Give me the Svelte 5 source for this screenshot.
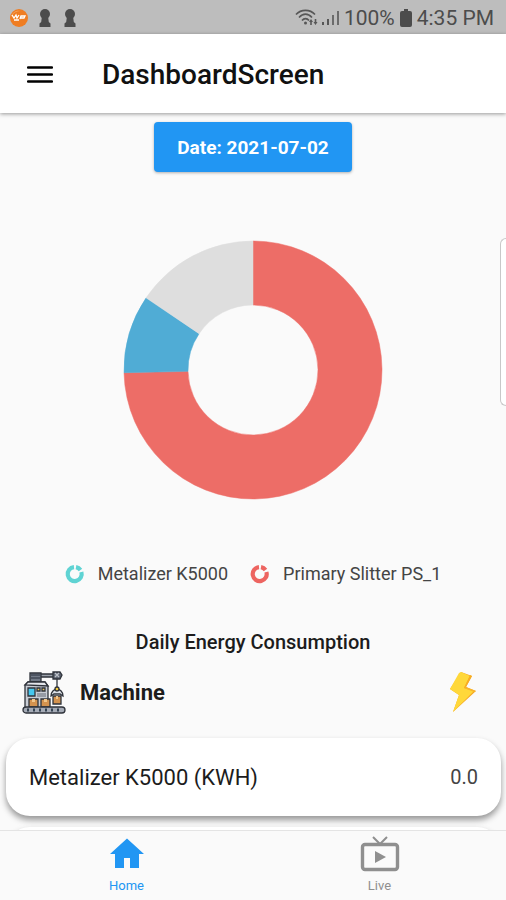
<script lang="ts">
  type Slice = { value: number; color: string };

  const slices: Slice[] = [
    { value: 268.8, color: "#ed6d67" },
    { value: 35.2, color: "#50acd5" },
    { value: 56, color: "#dedede" },
  ];

  const legend = [
    { label: "Metalizer K5000", color: "#5fd3d3" },
    { label: "Primary Slitter PS_1", color: "#ed6460" },
  ];

  const machines = [{ name: "Metalizer K5000 (KWH)", value: "0.0" }];

  let activeTab = $state("home");

  function point(radius: number, degrees: number) {
    const rad = ((degrees - 90) * Math.PI) / 180;
    return `${130 + radius * Math.cos(rad)} ${130 + radius * Math.sin(rad)}`;
  }

  function slicePath(start: number, end: number) {
    const large = end - start > 180 ? 1 : 0;
    return `M${point(129, start)} A129 129 0 ${large} 1 ${point(129, end)} L${point(65, end)} A65 65 0 ${large} 0 ${point(65, start)} Z`;
  }

  let arcs = $derived(
    slices.map((slice, i) => {
      const start = slices.slice(0, i).reduce((sum, s) => sum + s.value, 0);
      return { color: slice.color, d: slicePath(start, start + slice.value) };
    }),
  );
</script>

{#snippet keyhole()}
  <svg class="keyhole" width="12" height="20" viewBox="0 0 12 20" fill="#4c4c4c">
    <circle cx="6" cy="6" r="5" />
    <path d="M3 8h6l.8 6 1.700 1.500V19H.500v-3.500L2.200 14z" />
  </svg>
{/snippet}

<div class="screen">
  <div class="status-bar">
    <div class="status-group notifications">
      <svg width="20" height="20" viewBox="0 0 20 20">
        <circle cx="10" cy="10" r="9" fill="#ef7d22" />
        <path d="M2 9c1-4 5-7 9-6-4 0-7 2-9 6z" fill="#f6a560" />
        <path
          d="M3 7l2 3 2-3 1 3 2-3M11 11l1-3h4l-1 2h-3M5 12h5"
          fill="none"
          stroke="#fff"
          stroke-width="1.300"
        />
      </svg>
      {@render keyhole()}
      {@render keyhole()}
    </div>
    <div class="status-group">
      <svg width="45" height="20" viewBox="0 0 45 20" fill="none" stroke="#575757">
        <g stroke-width="1.600">
          <path d="M1 6.500C6 1 15 1 20 6.500" />
          <path d="M4 9.500C8 5 13 5 17 9.500" />
          <path d="M7 12.500C9 10 12 10 14 12.500" />
        </g>
        <circle cx="10.500" cy="15" r="1.500" fill="#575757" stroke="none" />
        <path
          d="M16 11l2 3h-1.200v3h-1.600v-3H14zM20.500 17l-2-3h1.200v-3h1.600v3h1.200z"
          fill="#575757"
          stroke="none"
        />
        <path d="M28 17v-3M33 17v-6" stroke-width="2" />
        <path d="M38 17V7M43 17V3" stroke-width="1.600" />
      </svg>
      <span>100%</span>
      <svg width="14" height="20" viewBox="0 0 14 20" fill="#4c4c4c">
        <path d="M5 1h4v2h2a2 2 0 0 1 2 2v12a2 2 0 0 1-2 2H3a2 2 0 0 1-2-2V5a2 2 0 0 1 2-2h2z" />
      </svg>
      <span>4:35 PM</span>
    </div>
  </div>

  <header class="app-bar">
    <button class="menu-btn" aria-label="Open menu">
      <svg
        width="26"
        height="20"
        viewBox="0 0 26 20"
        stroke="#000"
        stroke-width="2.400"
        stroke-linecap="round"
      >
        <path d="M1 2.500h24M1 9.500h24M1 16.500h24" />
      </svg>
    </button>
    <h1>DashboardScreen</h1>
  </header>

  <main>
    <button class="date-btn">Date: 2021-07-02</button>

    <svg class="donut" viewBox="0 0 260 260" role="img" aria-label="Energy share">
      {#each arcs as arc}
        <path d={arc.d} fill={arc.color} stroke={arc.color} stroke-width="0.500" />
      {/each}
    </svg>

    <ul class="legend">
      {#each legend as item}
        <li>
          <svg
            width="20"
            height="20"
            viewBox="0 0 20 20"
            fill="none"
            stroke={item.color}
            stroke-width="4.200"
          >
            <path d="M16.400 8A7 7 0 1 1 9 3.100" />
            <path d="M11 3.100A7 7 0 0 1 15.500 6" />
          </svg>
          <span>{item.label}</span>
        </li>
      {/each}
    </ul>

    <h2>Daily Energy Consumption</h2>

    <div class="machine-head">
      <svg width="44" height="44" viewBox="0 0 44 44" stroke="#2f333b" stroke-width="1.300">
        <path d="M18 4h16v3H18z" fill="#9ba1ab" />
        <path d="M8 3h11v9H8z" fill="#737b88" />
        <path d="M9 5h9M9 8h9" stroke="#424955" />
        <path d="M31 2h7l2 3-2 4h-7z" fill="#5c6370" />
        <path d="M33 3l4 4M37 3l-4 4" stroke="#bcc1c9" />
        <path d="M35 9v9" fill="none" />
        <path d="M3 15l3-3h17l3 4v22H3z" fill="#c9cdd5" />
        <path d="M3 15l3-3h17l3 4z" fill="#e5e7ec" />
        <path d="M6 18h7v8H6z" fill="#46c8ef" />
        <path d="M15 18h3v3h-3zM20 18h3v3h-3z" fill="#e8c45d" />
        <path d="M15 24h9M15 26h9" stroke="#858b95" />
        <path d="M29 26c0-9 12-9 12 0l-3-2h-6z" fill="#dce0e6" />
        <circle cx="35" cy="19" r="2" fill="#f1ca3d" />
        <path d="M7 29h9v8H7zM19 29h9v8h-9zM31 26h8v8h-8z" fill="#d4934f" />
        <path d="M10 29h3v3h-3zM22 29h3v3h-3zM34 26h2v3h-2z" fill="#f1c78c" stroke="none" />
        <rect x="1" y="37" width="42" height="6" rx="3" fill="#a5abb6" />
        <path
          d="M5 40h2M11 40h2M17 40h2M23 40h2M29 40h2M35 40h2"
          stroke="#344251"
          stroke-width="3"
        />
      </svg>
      <h3>Machine</h3>
      <svg class="bolt" width="28" height="44" viewBox="0 0 28 44">
        <path d="M12 2L23 6 17 17 27 21 4 42 10 25 1 19z" fill="#f5a623" />
        <path d="M10 3l2-1 9 4-6 12 10 3L4 42l6-17-9-6z" fill="#ffd83a" />
        <path d="M21 5l2 1-6 11-2 1z" fill="#f8ad22" />
        <path d="M15 18l2-1 10 4-2 1z" fill="#f9b52a" />
      </svg>
    </div>

    <div class="cards">
      {#each machines as machine}
        <div class="card">
          <span class="name">{machine.name}</span>
          <span class="value">{machine.value}</span>
        </div>
      {/each}
      <div class="card"></div>
    </div>

    <div class="edge-handle"></div>
  </main>

  <nav>
    <button class:active={activeTab === "home"} onclick={() => (activeTab = "home")}>
      <svg width="40" height="40" viewBox="0 0 40 40" fill="currentColor">
        <path d="M20 2.500L37 18h-5v14h-9V22h-6v10H8V18H3z" />
      </svg>
      <span>Home</span>
    </button>
    <button class:active={activeTab === "live"} onclick={() => (activeTab = "live")}>
      <svg width="40" height="40" viewBox="0 0 40 40" fill="none" stroke="currentColor">
        <rect x="2.500" y="8.500" width="35" height="25" rx="2.500" stroke-width="3.400" />
        <path d="M13 1l7 7 7-7" stroke-width="2" />
        <path d="M15 15l11 6-11 6z" fill="currentColor" stroke="none" />
      </svg>
      <span>Live</span>
    </button>
  </nav>
</div>

<style>
  :global(body) {
    margin: 0;
    background: #fafafa;
  }

  .screen {
    display: flex;
    flex-direction: column;
    height: 100vh;
    font-family: Roboto, "Liberation Sans", sans-serif;
    color: #1c1c1c;
    background: #fafafa;
  }

  button {
    border: none;
    padding: 0;
    background: none;
    font-family: inherit;
    cursor: pointer;
  }

  svg {
    display: block;
    flex-shrink: 0;
  }

  .status-bar {
    display: flex;
    flex-shrink: 0;
    align-items: center;
    justify-content: space-between;
    height: 34px;
    padding: 2px 12px 0 9px;
    box-sizing: border-box;
    background: #bdbdbd;
    color: #4c4c4c;
    font-size: 21px;
  }

  .status-group {
    display: flex;
    align-items: center;
    gap: 4px;
  }

  .notifications {
    gap: 10px;
  }

  .keyhole + .keyhole {
    margin-left: 3px;
  }

  .app-bar {
    display: flex;
    flex-shrink: 0;
    align-items: center;
    gap: 49px;
    height: 79px;
    padding: 2px 27px 0;
    box-sizing: border-box;
    background: #fff;
    box-shadow: 0 1px 4px rgba(0, 0, 0, 0.4);
    z-index: 1;
  }

  h1,
  h2,
  h3 {
    margin: 0;
  }

  h1 {
    font-size: 28px;
    font-weight: 500;
    color: #111;
  }

  main {
    position: relative;
    display: flex;
    flex: 1;
    flex-direction: column;
    align-items: center;
    min-height: 0;
    padding-top: 9px;
    overflow: hidden;
  }

  main > * {
    flex-shrink: 0;
  }

  .date-btn {
    height: 50px;
    padding: 0 23px;
    border-radius: 4px;
    background: #2196f3;
    color: #fff;
    font-size: 19px;
    font-weight: 700;
    box-shadow: 0 1px 3px rgba(0, 0, 0, 0.3);
  }

  .donut {
    width: 260px;
    height: 260px;
    margin-top: 68px;
  }

  .legend {
    display: flex;
    gap: 22px;
    margin: 62px 0 0;
    padding: 0;
    list-style: none;
    font-size: 18px;
    line-height: 24px;
    color: #444;
  }

  .legend li {
    display: flex;
    align-items: center;
    gap: 13px;
  }

  h2 {
    margin-top: 44px;
    font-size: 20px;
    font-weight: 500;
    line-height: 24px;
  }

  .machine-head {
    display: flex;
    align-items: center;
    gap: 14px;
    width: 100%;
    margin-top: 16px;
    padding: 0 29px 0 22px;
    box-sizing: border-box;
  }

  h3 {
    font-size: 22px;
    font-weight: 700;
  }

  .bolt {
    margin-left: auto;
  }

  .cards {
    display: flex;
    flex-direction: column;
    gap: 11px;
    width: 100%;
    margin-top: 24px;
    padding: 0 5px 0 6px;
    box-sizing: border-box;
  }

  .card {
    display: flex;
    align-items: center;
    justify-content: space-between;
    min-height: 78px;
    padding: 0 23px;
    box-sizing: border-box;
    border-radius: 24px;
    background: #fff;
    box-shadow: 0 4px 6px rgba(0, 0, 0, 0.4);
  }

  .name {
    font-size: 22px;
  }

  .value {
    font-size: 20px;
    color: #444;
  }

  .edge-handle {
    position: absolute;
    top: 125px;
    right: 0;
    width: 6px;
    height: 168px;
    box-sizing: border-box;
    border: 1px solid #c8c8c8;
    border-right: none;
    border-radius: 6px 0 0 6px;
    background: #fff;
  }

  nav {
    display: flex;
    flex-shrink: 0;
    height: 70px;
    box-sizing: border-box;
    border-top: 1px solid #e4e4e4;
    background: #fafafa;
  }

  nav button {
    display: flex;
    flex: 1;
    flex-direction: column;
    align-items: center;
    gap: 2px;
    padding-top: 5px;
    color: #8f8f8f;
    font-size: 13px;
    line-height: 16px;
  }

  nav button.active {
    color: #2196f3;
  }
</style>
